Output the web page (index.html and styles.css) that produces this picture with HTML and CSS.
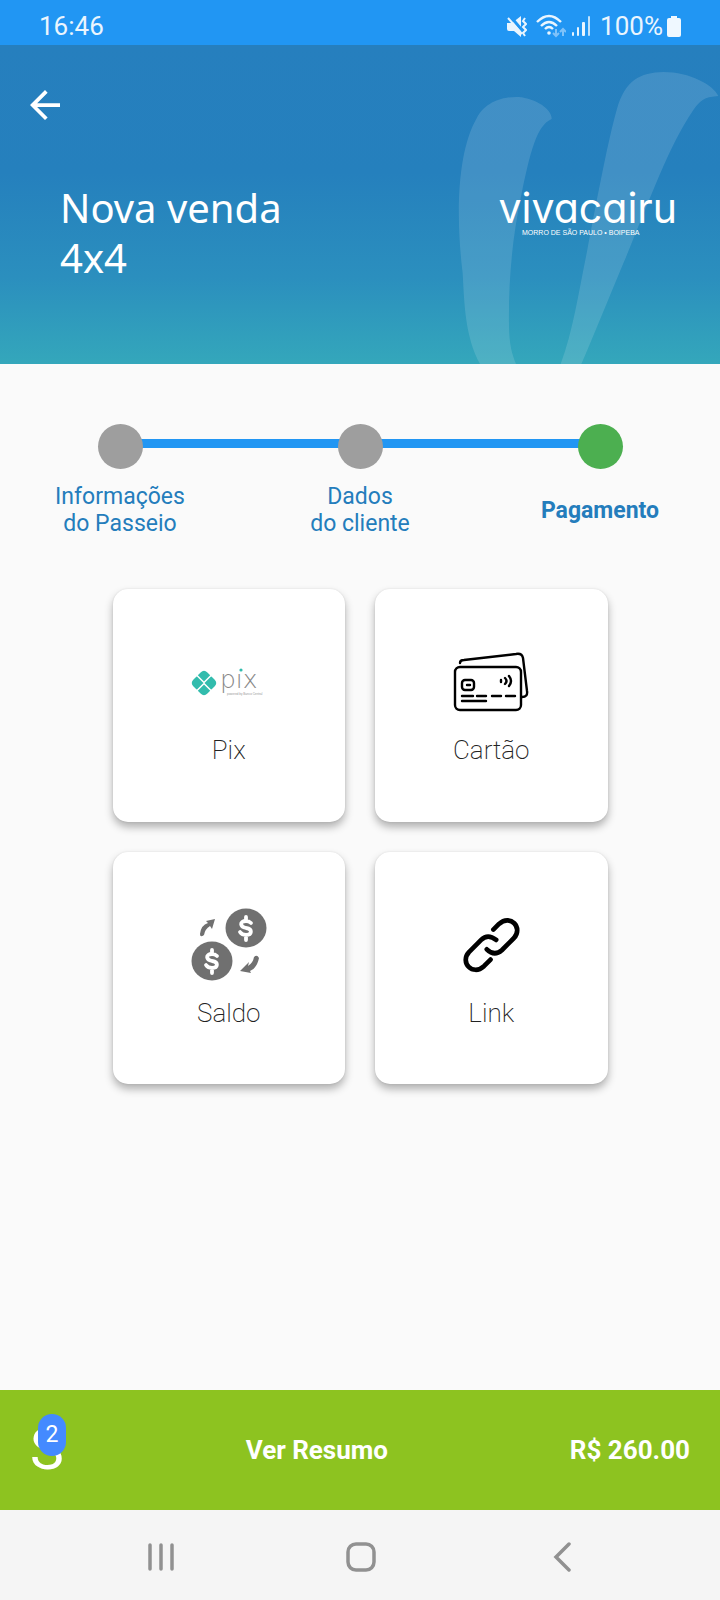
FILE: index.html
```
<!DOCTYPE html>
<html lang="pt-BR">
<head>
<meta charset="utf-8">
<meta name="viewport" content="width=device-width, initial-scale=1">
<title>Nova venda</title>
<link rel="stylesheet" href="styles.css">
</head>
<body>
<div class="status">
  <time>16:46</time>
  <div class="status-icons">
    <svg width="20" height="21" viewBox="0 0 20 21" fill="#eaf5fe"><path d="M0 7h5l9-7v21l-7-6H2q-2 0-2-2z"/><path d="M3 0l16 19" stroke="#2196f3" stroke-width="3"/><path d="M1 2l14 16" stroke="#eaf5fe" stroke-width="2"/><path d="M18 2l-2 3 3 3-3 3 3 3-3 3 2 3" fill="none" stroke="#eaf5fe" stroke-width="2"/></svg>
    <svg class="wifi" width="30" height="24" viewBox="0 0 30 24" fill="none" stroke="#eaf5fe" stroke-width="2.4"><path d="M1 8q12-12 24 0M5 12q8-8 16 0M9 15q4-4 8 0"/><circle cx="13" cy="19" r="1.8" fill="#eaf5fe" stroke="none"/><path d="M20 15v7m-3-3l3 3 3-3M27 22v-7m-3 3l3-3 3 3" stroke="#7fc2f9" stroke-width="2"/></svg>
    <svg class="signal" width="19" height="20" viewBox="0 0 19 20" fill="#eaf5fe"><rect y="16" width="2" height="4" rx="1"/><rect x="5" y="11" width="2" height="9" rx="1"/><rect x="10" y="6" width="3" height="14" rx="1"/><rect x="16" width="2" height="20" rx="1" opacity=".8"/></svg>
    <span>100%</span>
    <svg width="14" height="21" viewBox="0 0 14 21" fill="#eff8ff"><path d="M4 0h6v2h2q2 0 2 2v15q0 2-2 2H2q-2 0-2-2V4q0-2 2-2h2z"/></svg>
  </div>
</div>

<header class="hero">
  <svg class="hero-mark" viewBox="0 -15 900 957" fill="#fff" fill-opacity=".13" aria-hidden="true"><path d="M180 942C135 860 133 760 128 670C105 480 115 300 170 205C200 148 260 140 295 141C350 145 397 180 395 207C350 225 330 310 305 430C275 570 265 700 267 830C268 880 275 910 288 942Z"/><path d="M422 942C460 840 475 730 500 610C540 400 565 270 590 180C615 90 660 68 730 66C810 66 880 105 895 138C860 141 845 145 820 180C740 300 690 450 610 640C560 760 520 860 484 942Z"/></svg>
  <button class="back" aria-label="Voltar"><svg width="30" height="30" viewBox="4 4 16 16" fill="#fff"><path d="M20 11H7.8l5.6-5.6L12 4l-8 8 8 8 1.4-1.4L7.8 13H20z"/></svg></button>
  <div class="hero-row">
    <h1>Nova venda<br>4x4</h1>
    <div class="brand">
      <div class="brand-name">vivacairu</div>
      <div class="brand-sub">MORRO DE SÃO PAULO • BOIPEBA</div>
    </div>
  </div>
</header>

<main>
  <ol class="steps">
    <li><i class="dot"></i><span>Informações<br>do Passeio</span></li>
    <li><i class="dot"></i><span>Dados<br>do cliente</span></li>
    <li class="current" aria-current="step"><i class="dot"></i><span>Pagamento</span></li>
  </ol>

  <div class="options">
    <button class="card">
      <svg width="76" height="76" viewBox="0 0 76 76"><g transform="translate(0 25)"><path d="M9.600 2.500Q13 -1 16.400 2.500L23.500 9.600Q27 13 23.500 16.400L16.400 23.500Q13 27 9.600 23.500L2.500 16.400Q-1 13 2.500 9.600Z" fill="#32bcad"/><path d="M3 5.500h3l7 7 7-7h3M3 20.500h3l7-7 7 7h3" fill="none" stroke="#fff" stroke-width="1.500"/></g><text x="29" y="43" class="pix-name">pıx</text><circle cx="50" cy="25" r="1.600" fill="#32bcad"/><text x="36" y="50" class="pix-sub">powered by Banco Central</text></svg>
      <span>Pix</span>
    </button>
    <button class="card">
      <svg width="76" height="76" viewBox="0 0 76 76" fill="none" stroke="#000" stroke-width="2.400" stroke-linecap="round" stroke-linejoin="round"><rect x="2" y="22" width="66" height="43" rx="5"/><path d="M7 18q0-3 4-3l52-6q6-1 7 4l4 33q1 6-5 6M9 51h11m4 0h9m6 0h9m5 0h9M9 56h24"/><rect x="9" y="35" width="12" height="10" rx="3"/><path d="M14 40h3M48 35v2m4-4q3 3 0 6m4-8q4 5 0 10"/></svg>
      <span>Cartão</span>
    </button>
    <button class="card">
      <svg width="76" height="76" viewBox="0 2 76 76"><g fill="#707070"><ellipse cx="55" cy="22" rx="20.500" ry="19.500"/><ellipse cx="21" cy="55" rx="20.500" ry="19.500"/><path d="M15 15l9-2-3 10-2-3q-5 3-6 9-4 3-4-1 1-9 8-11zM49 65l9-9-1 4q5-3 6-9 3-3 5 1-2 10-9 13l1 2z"/></g><g fill="none" stroke="#fff" stroke-width="3.800" stroke-linecap="round"><path id="dollar" d="M60 17q-2-2-5-2c-7 0-6 6 0 7 7 1 6 7 0 7q-4 0-6-3M55 11v4M55 29v5"/><use href="#dollar" x="-34" y="33"/></g></svg>
      <span>Saldo</span>
    </button>
    <button class="card">
      <svg width="76" height="76" viewBox="-2 0 81 81" fill="none" stroke="#000" stroke-width="5" stroke-linecap="round" stroke-linejoin="round"><path d="M41 23l6-6c12-11 26 4 16 15L50 45q-8 7-16-1M44 34q-9-7-16 0L15 47c-10 11 4 26 16 15l7-7"/></svg>
      <span>Link</span>
    </button>
  </div>
</main>

<button class="summary">
  <span class="cart">S<b class="badge">2</b></span>
  <span>Ver Resumo</span>
  <span>R$ 260.00</span>
</button>

<nav class="system">
  <button aria-label="Recentes"><svg width="30" height="30" viewBox="0 0 30 30"><path d="M4 3v24M15 3v24M26 3v24"/></svg></button>
  <button aria-label="Início"><svg width="30" height="30" viewBox="0 0 30 30"><rect x="2" y="2" width="26" height="26" rx="8"/></svg></button>
  <button aria-label="Voltar"><svg width="30" height="30" viewBox="0 0 30 30"><path d="M23 2L10 15l13 13"/></svg></button>
</nav>
</body>
</html>
```
FILE: styles.css
```
* { box-sizing: border-box; }
body {
  margin: 0;
  min-height: 100vh;
  display: flex;
  flex-direction: column;
  background: #fafafa;
  font-family: Roboto, sans-serif;
}
button {
  border: 0;
  padding: 0;
  background: none;
  font: inherit;
  color: inherit;
  cursor: pointer;
}
svg { flex: none; display: block; }
.status {
  display: flex;
  justify-content: space-between;
  align-items: center;
  height: 45px;
  padding: 7px 39px 0;
  background: #2196f3;
  color: #eaf5fe;
  font-size: 26px;
  line-height: 32px;
}
.status-icons { display: flex; align-items: center; gap: 4px; }
.wifi { margin-left: 5px; }
.signal { margin: 0 5px 0 2px; }
.hero {
  position: relative;
  padding: 45px 43px 79px 60px;
  background: linear-gradient(#267fbe, #2580bd 40%, #2b8fbe 73%, #34a7bb);
  color: #fff;
}
.hero-mark { position: absolute; right: 0; top: 0; height: 100%; }
.back { display: block; margin: 0 0 63px -30px; }
.hero-row {
  position: relative;
  display: flex;
  justify-content: space-between;
}
h1 {
  margin: 0;
  font: 400 40px/50px "Noto Sans", sans-serif;
  padding-bottom: 2px;
}
.brand { text-align: center; }
.brand-name {
  font: 400 41px/50px Inter, sans-serif;
  font-feature-settings: "cv11";
}
.brand-sub {
  margin-top: -4px;
  padding-right: 14px;
  font: 7px/8px "Liberation Sans", sans-serif;
}
main { flex: 1; }
.steps {
  display: grid;
  grid-template-columns: repeat(3, 1fr);
  margin: 0;
  padding: 60px 0 0;
  list-style: none;
  color: #247dbc;
  font-size: 23px;
  line-height: 27px;
  text-align: center;
}
.steps li {
  position: relative;
  display: flex;
  flex-direction: column;
  align-items: center;
}
.steps li + li::before {
  content: "";
  position: absolute;
  top: 15px;
  right: 50%;
  width: 100%;
  height: 9px;
  background: #2196f3;
}
.dot {
  position: relative;
  z-index: 1;
  width: 45px;
  height: 45px;
  border-radius: 50%;
  background: #9e9e9e;
}
.steps span {
  display: flex;
  align-items: center;
  min-height: 54px;
  margin-top: 14px;
}
.current { font-weight: 700; }
.current .dot { background: #4caf50; }
.options {
  display: grid;
  grid-template-columns: repeat(2, 1fr);
  gap: 30px;
  max-width: 495px;
  margin: 52px auto 30px;
}
.card {
  display: flex;
  flex-direction: column;
  align-items: center;
  justify-content: center;
  gap: 14px;
  aspect-ratio: 1;
  border-radius: 15px;
  background: #fff;
  box-shadow: 0 5px 9px rgba(0, 0, 0, .3), 0 0 2px rgba(0, 0, 0, .1);
  color: #222;
  font-size: 26px;
  font-weight: 200;
  line-height: 30px;
}
.pix-name { font: 200 25px "DejaVu Sans", sans-serif; fill: #888; }
.pix-sub { font: 3px "Liberation Sans", sans-serif; fill: #999; }
.summary {
  display: flex;
  align-items: center;
  justify-content: space-between;
  height: 120px;
  padding: 0 30px;
  background: #8dc320;
  color: #fff;
  font-size: 26px;
  font-weight: 700;
}
.cart {
  position: relative;
  font-size: 57px;
  font-weight: 400;
  line-height: 60px;
}
.badge {
  position: absolute;
  left: 8px;
  top: -6px;
  width: 28px;
  border-radius: 14px;
  background: #448aff;
  font-size: 23px;
  font-weight: 400;
  line-height: 42px;
}
.system {
  display: grid;
  grid-template-columns: repeat(3, 1fr);
  height: 90px;
  padding: 4px 59px 0 61px;
  background: #f5f5f5;
}
.system button { display: grid; place-items: center; }
.system svg {
  fill: none;
  stroke: #919191;
  stroke-width: 3.5;
  stroke-linecap: round;
}
```
